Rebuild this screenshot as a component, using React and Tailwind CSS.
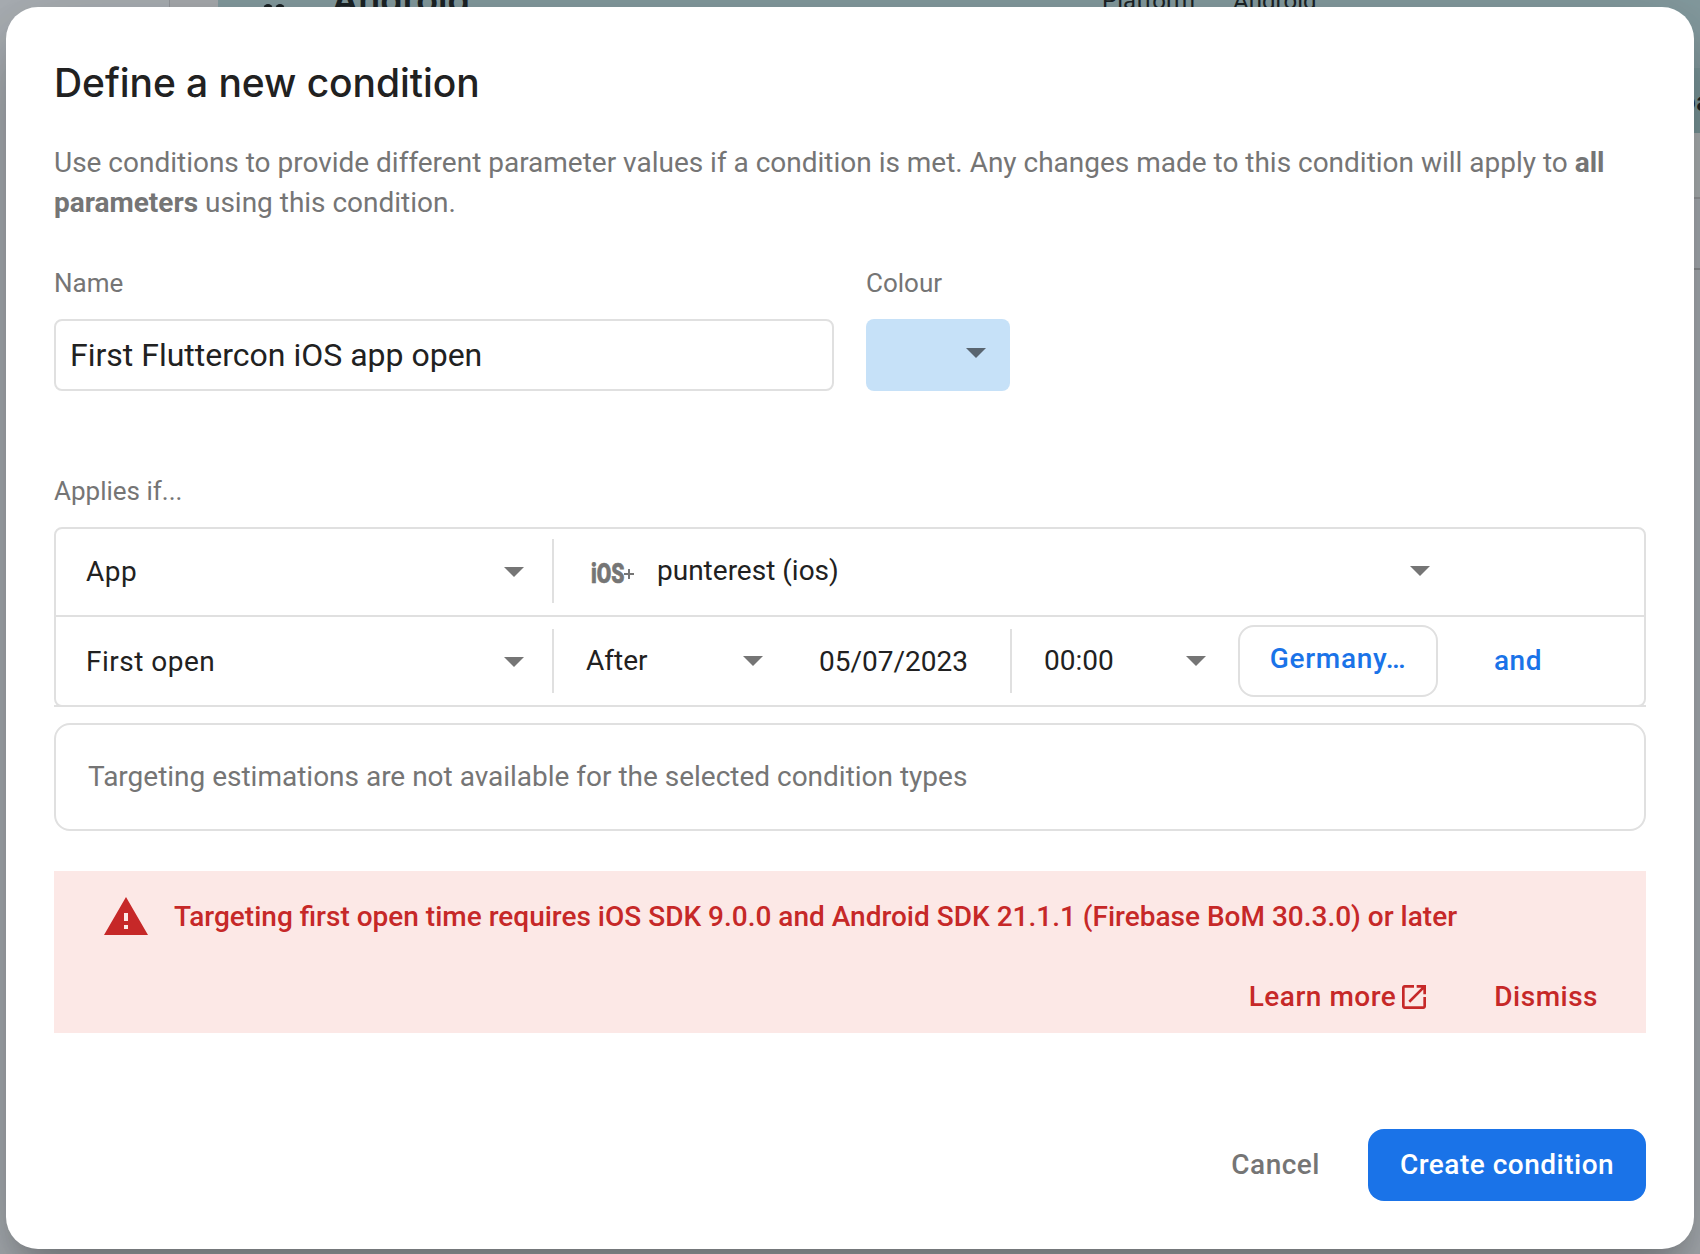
import React from "react";

function Arrow({ color = "fill-[#757575]", className = "" }) {
  return (
    <svg viewBox="0 0 20 10" className={`h-[10px] w-5 shrink-0 ${color} ${className}`} aria-hidden="true">
      <path d="M0 0h20L10 10z" />
    </svg>
  );
}

function Divider({ className = "" }) {
  return <div className={`h-16 w-0.5 shrink-0 self-start bg-[#e0e0e0] ${className}`} />;
}

function IosBadge() {
  return (
    <svg viewBox="0 0 44 24" className="mt-1.5 h-6 w-11 shrink-0 fill-[#757575] font-['Roboto',sans-serif] font-black" aria-label="iOS+">
      <text x="0" y="20.7" fontSize="27" textLength="33.5" lengthAdjust="spacingAndGlyphs" stroke="#757575" strokeWidth="0.6">iOS</text>
      <path d="M37 7h2v4h4v2h-4v4h-2v-4h-4v-2h4z" />
    </svg>
  );
}

function Backdrop() {
  return (
    <div className="absolute inset-0 flex bg-[#abb0b5]" aria-hidden="true">
      <div className="h-[133px] w-[170px] shrink-0 border-r border-[#95989c]" />
      <div className="flex grow flex-col">
        <div className="flex h-[133px]">
          <div className="w-12 shrink-0 bg-[#a9acaf]" />
          <div className="grow bg-[#859ca0]">
            <div className="flex h-[68px] items-start overflow-hidden text-[#1c2326]">
              <svg viewBox="0 0 24 12" className="ml-[44px] mt-[3px] h-3 w-6 shrink-0 fill-current">
                <circle cx="6" cy="5.5" r="4.5" />
                <circle cx="18" cy="5.5" r="4.5" />
              </svg>
              <div className="-mt-6 ml-[46px] w-[770px] font-['Inter',sans-serif] text-[36px] font-semibold leading-[48px]">Android</div>
              <div className="-mt-[15px] text-[24px] leading-8">Platform</div>
              <div className="-mt-[15px] ml-[38px] text-[24px] leading-8">Android</div>
            </div>
            <div className="flex h-[65px] items-center justify-end overflow-hidden bg-[#7b979a] pt-0.5 text-[28px] font-medium text-[#1c2326]">
              <span className="-mr-[11px]">oa</span>
            </div>
          </div>
        </div>
        <div className="h-[66px] border-b-2 border-[#979a9d] bg-[#aeb4b5]" />
        <div className="h-[71px] border-b-2 border-[#8d9093]" />
      </div>
    </div>
  );
}

function Field({ label, className = "", children }) {
  return (
    <div className={className}>
      <div className="mb-5 text-[26px] leading-8 text-[#757575]">{label}</div>
      {children}
    </div>
  );
}

export default function App() {
  return (
    <div className="relative h-[1254px] w-[1700px] overflow-hidden font-['Roboto',sans-serif] text-[28px] leading-10 text-[#212121]">
      <Backdrop />
      <main className="relative ml-1.5 mt-[7px] flex h-[1242px] w-[1688px] flex-col rounded-[32px] bg-white px-12 pt-[52px] shadow-[0_22px_30px_-14px_rgba(0,0,0,0.2),0_48px_76px_6px_rgba(0,0,0,0.14),0_18px_92px_16px_rgba(0,0,0,0.12)]">
        <h1 className="font-['Inter',sans-serif] text-[39px] font-[460] leading-[48px] tracking-[-0.07px]">Define a new condition</h1>
        <p className="mt-9 tracking-[-0.01px] text-[#757575]">
          Use conditions to provide different parameter values if a condition is met. Any changes made to this condition will apply to{" "}
          <b className="font-bold">all parameters</b> using this condition.
        </p>

        <div className="mt-11 flex gap-8">
          <Field label="Name" className="w-[780px]">
            <div className="flex h-[72px] items-center rounded-lg border-2 border-[#e0e0e0] px-3.5 text-[32px]">First Fluttercon iOS app open</div>
          </Field>
          <Field label="Colour" className="w-36">
            <div className="flex h-[72px] justify-end rounded-lg bg-[#c6e1f8] pr-6 pt-[29px]">
              <Arrow color="fill-[#596570]" />
            </div>
          </Field>
        </div>

        <Field label="Applies if..." className="mt-[84px]">
          <div className="h-[180px] rounded-lg border-2 border-[#e0e0e0]">
            <div className="flex h-[88px] items-center border-b-2 border-[#e0e0e0]">
              <div className="flex w-[496px] items-center justify-between pl-[30px] pr-7">
                <span className="tracking-[0.5px]">App</span>
                <Arrow />
              </div>
              <Divider className="mt-2.5" />
              <div className="flex w-[876px] items-center pb-0.5 pl-[37px]">
                <IosBadge />
                <span className="ml-[22px]">punterest (ios)</span>
                <Arrow className="ml-auto" />
              </div>
            </div>
            <div className="flex h-[88px] items-center">
              <div className="flex w-[496px] items-center justify-between pl-[30px] pr-7 pt-0.5">
                <span className="tracking-[0.5px]">First open</span>
                <Arrow />
              </div>
              <Divider className="mt-3" />
              <div className="flex w-[209px] items-center justify-between pl-8">
                <span>After</span>
                <Arrow />
              </div>
              <div className="w-[247px] pl-14 pt-0.5">05/07/2023</div>
              <Divider className="mt-3" />
              <div className="flex w-[194px] items-center justify-between pl-8">
                <span>00:00</span>
                <Arrow />
              </div>
              <button className="ml-8 flex h-[72px] w-[200px] items-center justify-center rounded-2xl border-2 border-[#e0e0e0] pb-1 font-medium tracking-[0.7px] text-[#1a73e8]">Germany…</button>
              <span className="ml-14 font-medium tracking-[0.5px] text-[#1a73e8]">and</span>
            </div>
          </div>
          <div className="-mt-0.5 h-0.5 bg-[#e0e0e0]" />
        </Field>

        <div className="mt-4 flex h-[108px] items-center rounded-2xl border-2 border-[#e0e0e0] px-8 tracking-[-0.01px] text-[#757575]">
          Targeting estimations are not available for the selected condition types
        </div>

        <section className="mt-10 flex h-[162px] flex-col bg-[#fce8e6] pl-12 text-[28px] font-medium text-[#c62828]">
          <div className="flex h-[70px] items-start pt-[22px]">
            <svg viewBox="0 0 24 24" className="size-12 shrink-0 fill-current" aria-hidden="true">
              <path d="M1 21h22L12 2 1 21zm12-3h-2v-2h2v2zm0-4h-2v-4h2v4z" />
            </svg>
            <span className="ml-6 mt-1">Targeting first open time requires iOS SDK 9.0.0 and Android SDK 21.1.1 (Firebase BoM 30.3.0) or later</span>
          </div>
          <div className="mt-9 flex justify-end pr-12 tracking-[0.5px]">
            <a className="flex items-center">
              Learn more
              <svg viewBox="0 0 24 24" className="ml-0.5 size-8 fill-current" aria-hidden="true">
                <path d="M19 19H5V5h7V3H5c-1.11 0-2 .9-2 2v14c0 1.1.89 2 2 2h14c1.1 0 2-.9 2-2v-7h-2v7zM14 3v2h3.59l-9.83 9.83 1.41 1.41L19 6.41V10h2V3h-7z" />
              </svg>
            </a>
            <button className="ml-16">Dismiss</button>
          </div>
        </section>

        <footer className="mt-24 flex h-[72px] items-center justify-end font-medium tracking-[0.5px]">
          <button className="mr-12 text-[#757575]">Cancel</button>
          <button className="h-[72px] w-[278px] rounded-2xl bg-[#1a73e8] text-white">Create condition</button>
        </footer>
      </main>
    </div>
  );
}
